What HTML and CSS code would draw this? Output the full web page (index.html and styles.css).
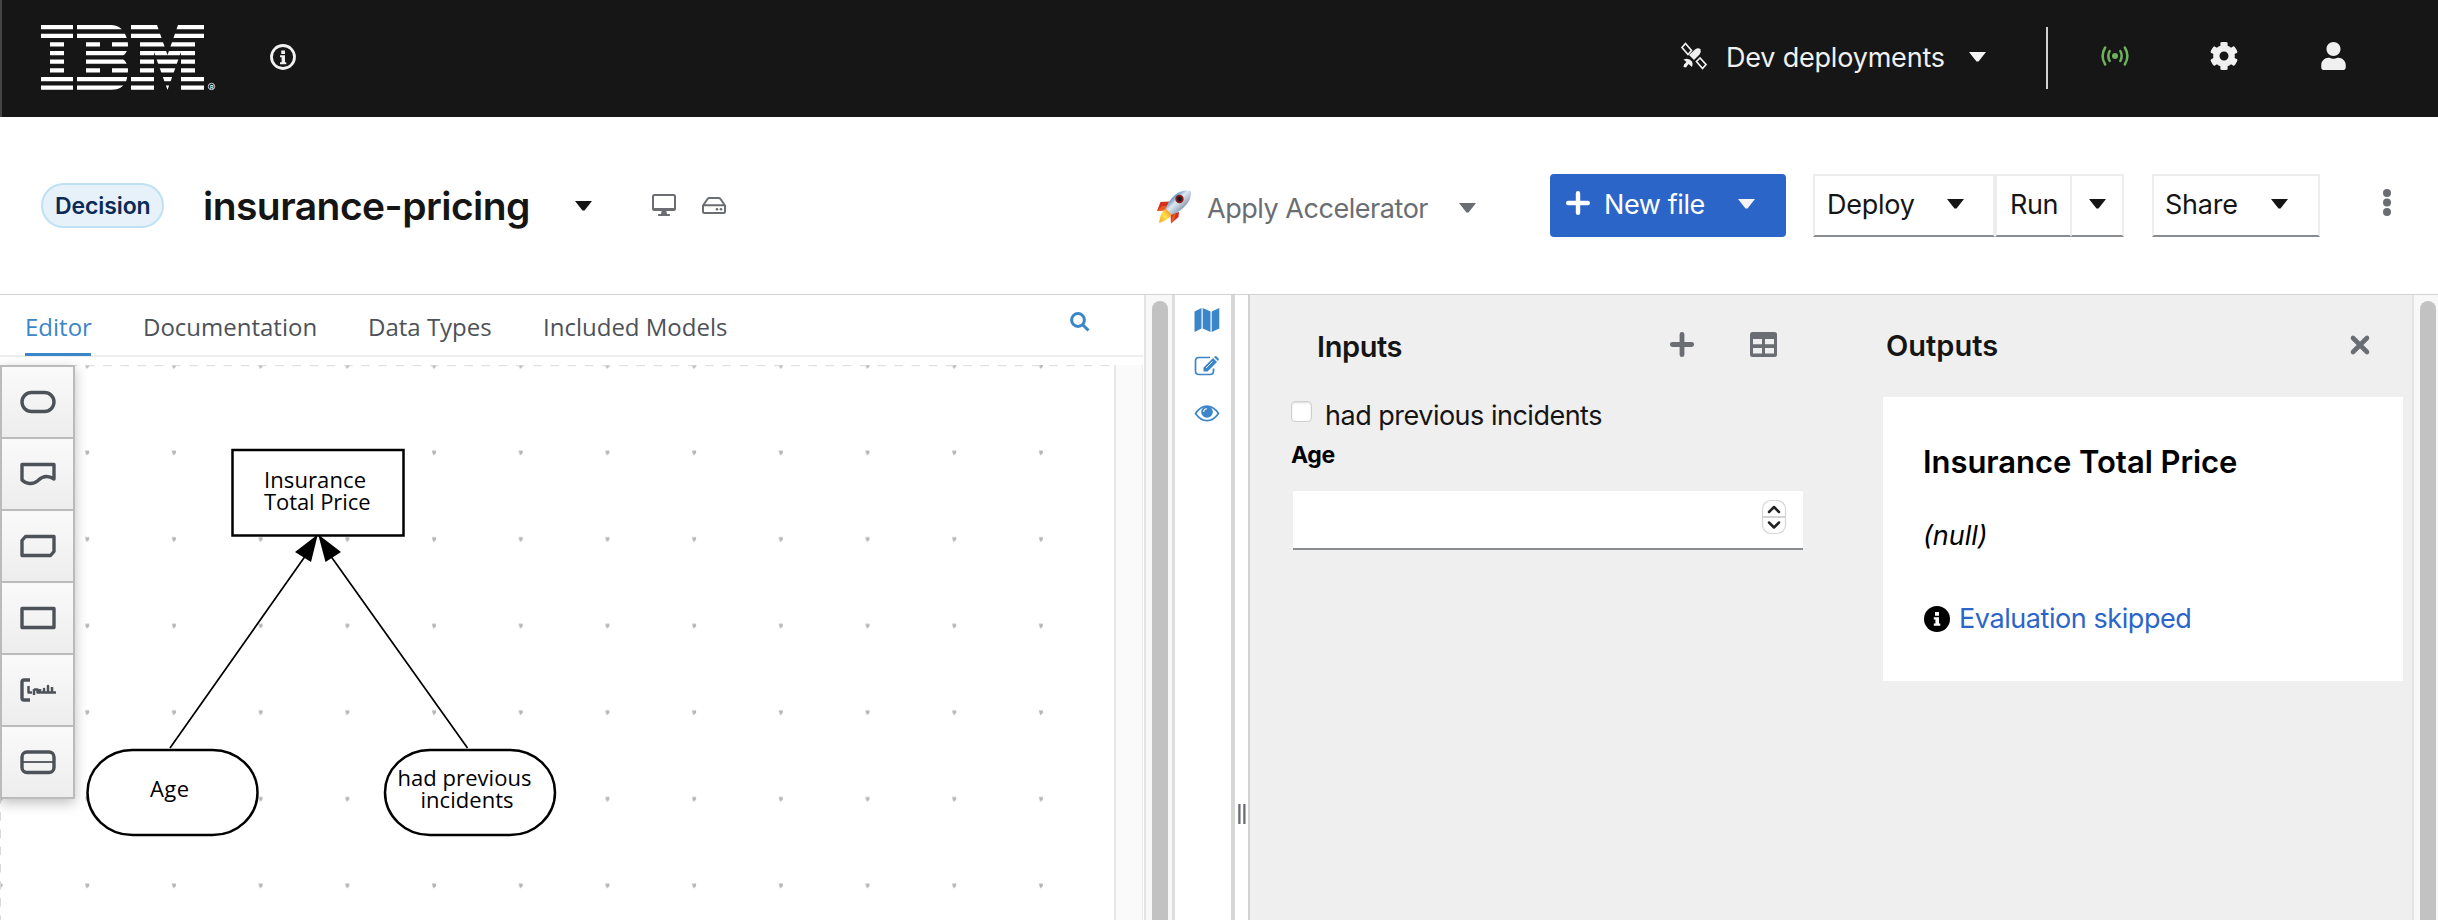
FILE: index.html
```html
<!DOCTYPE html>
<html lang="en">
<head>
<meta charset="utf-8">
<title>insurance-pricing</title>
<link rel="stylesheet" href="styles.css">
</head>
<body>
<header class="masthead">
  <svg class="logo" viewBox="0 0 176 66" width="176" height="66" role="img" aria-label="IBM">
    <defs><clipPath id="bars"><path d="M0 0h164v4.2H0zM0 8.7h164v4.2H0zM0 17.3h164v4.2H0zM0 26h164v4.2H0zM0 34.6h164v4.2H0zM0 43.3h164v4.2H0zM0 52h164v4.2H0zM0 60.6h164v4.2H0z"/></clipPath></defs>
    <g clip-path="url(#bars)" fill="#fff">
      <path d="M0 0h32v15H23v34h9v16H0V49h9V15H0z"/>
      <path fill-rule="evenodd" d="M36 0H70C77 0 82 4 84 9C86 13 87 16 87 20C87 26 84 30 80 32.4C84 35 87 39 87 45C87 49 86 53 85 57C82 62 77 65 70 65H36V49H45V15H36zM59 15V24H71V15zM59 41V50H71V41z"/>
      <path d="M90 0H116L126.500 30L137 0H163V15H154V49H163V65H140V27L126.500 65L113 27V65H90V49H99V15H90z"/>
    </g>
    <circle cx="170.500" cy="61.500" r="3.200" fill="none" stroke="#fff" stroke-width=".8"/>
    <text class="reg" x="168.900" y="63.500">R</text>
  </svg>
  <svg class="about" viewBox="0 0 26 26" width="26" height="26"><circle cx="13" cy="13" r="11.500" fill="none" stroke="#f0f0f0" stroke-width="2.800"/><path fill="#f0f0f0" d="M11.200 6.600h3.800v3.400h-3.800zM10 11.200h5v7h1.300v2H10v-2h1.600v-5H10z"/></svg>
  <div class="deployments">
    <svg class="satellite" viewBox="0 0 28 28" width="28" height="28" fill="#f0f0f0"><path d="M5.500 1.500L2 5.500L8 12.500L11.500 8.500z" fill="none" stroke="#f0f0f0" stroke-width="1.700"/><path d="M20 16L16.500 19.500L22.500 26.500L26 22.500z" fill="none" stroke="#f0f0f0" stroke-width="1.700"/><path d="M9 13L15 7.500Q18.500 5 20.500 7.500Q21.500 9.500 19.500 12.500L14 18z"/><path d="M3.500 17.500Q9 15.500 12 19.500Q13.500 22.500 12 25L8.500 22L6 25.500L3.500 25L4 22.500L6.500 20z"/></svg>
    <span class="t dep">Dev deployments</span>
    <i class="caret light"></i>
  </div>
  <i class="rule"></i>
  <svg class="signal" viewBox="0 0 28 20" width="28" height="20" fill="none" stroke="#6cb35c" stroke-width="2.500" stroke-linecap="round"><circle cx="14" cy="10" r="3" fill="#6cb35c" stroke="none"/><path d="M4.200 1.500Q-1 10 4.200 18.500M8.700 5Q5.900 10 8.700 15M19.300 5Q22.100 10 19.300 15M23.800 1.500Q29 10 23.800 18.500"/></svg>
  <svg class="gear" viewBox="8 8 496 496" width="28" height="28" fill="#f0f0f0"><path d="M487.400 315.700l-42.600-24.600c4.300-23.200 4.300-47 0-70.200l42.600-24.600c4.900-2.800 7.100-8.600 5.500-14-11.100-35.600-30-67.800-54.700-94.600-3.800-4.100-10-5.100-14.800-2.300L380.800 110c-17.900-15.400-38.500-27.300-60.800-35.100V25.800c0-5.600-3.900-10.500-9.400-11.700-36.700-8.200-74.300-7.800-109.200 0-5.500 1.200-9.400 6.100-9.400 11.700V75c-22.200 7.900-42.800 19.800-60.800 35.100L88.700 85.500c-4.900-2.800-11-1.900-14.800 2.300-24.700 26.700-43.600 58.900-54.700 94.600-1.700 5.400.6 11.200 5.500 14L67.300 221c-4.300 23.200-4.300 47 0 70.200l-42.600 24.600c-4.900 2.800-7.100 8.600-5.500 14 11.100 35.600 30 67.800 54.700 94.600 3.800 4.100 10 5.100 14.800 2.300l42.600-24.600c17.900 15.400 38.500 27.300 60.800 35.100v49.200c0 5.600 3.900 10.500 9.400 11.700 36.700 8.200 74.300 7.800 109.200 0 5.500-1.200 9.400-6.100 9.400-11.700v-49.200c22.200-7.900 42.800-19.800 60.800-35.100l42.600 24.600c4.900 2.800 11 1.900 14.800-2.300 24.700-26.700 43.600-58.900 54.700-94.600 1.500-5.500-.7-11.300-5.600-14.100zM256 336c-44.100 0-80-35.900-80-80s35.900-80 80-80 80 35.900 80 80-35.900 80-80 80z"/></svg>
  <svg class="user" viewBox="0 0 448 512" width="25" height="28" fill="#f0f0f0"><path d="M224 256c70.700 0 128-57.300 128-128S294.700 0 224 0 96 57.300 96 128s57.300 128 128 128zm89.600 32h-16.700c-22.200 10.200-46.900 16-72.900 16s-50.600-5.800-72.900-16h-16.700C60.200 288 0 348.200 0 422.400V464c0 26.500 21.500 48 48 48h352c26.500 0 48-21.500 48-48v-41.600c0-74.200-60.200-134.400-134.400-134.400z"/></svg>
</header>

<section class="toolbar">
  <span class="badge"><span class="t dec">Decision</span></span>
  <span class="t name">insurance-pricing</span>
  <i class="caret name-caret"></i>
  <svg class="desktop" viewBox="0 0 24 22" width="24" height="22"><path fill="none" stroke="#6a6e73" stroke-width="2" d="M2.500 1H21.500Q23 1 23 2.500V14.500Q23 16 21.500 16H2.500Q1 16 1 14.500V2.500Q1 1 2.500 1z"/><path fill="#6a6e73" d="M1 14h22v2.600H1zM9.800 16h4.400l.8 4h2.300q.7 0 .7 1t-.7 1H6.700Q6 22 6 21t.7-1H9z"/></svg>
  <svg class="hdd" viewBox="0 0 24 17" width="24" height="17"><path fill="none" stroke="#6a6e73" stroke-width="2" stroke-linejoin="round" d="M1 8.500L5.500 2Q6.200 1 7.500 1H16.500Q17.800 1 18.500 2L23 8.500V14.500Q23 16 21.500 16H2.500Q1 16 1 14.500zM1 8.300H23"/><circle cx="15" cy="12.200" r="1.300" fill="#6a6e73"/><circle cx="19" cy="12.200" r="1.300" fill="#6a6e73"/></svg>
  <div class="accel">
    <svg class="rocket" viewBox="0 0 36 34" width="36" height="34">
      <defs><linearGradient id="hull" x1="0" y1="0" x2="1" y2="1"><stop offset=".25" stop-color="#4d86b8"/><stop offset=".45" stop-color="#dfe8f0"/><stop offset=".62" stop-color="#a9b9c9"/><stop offset=".85" stop-color="#3f6288"/></linearGradient><linearGradient id="flame" x1="1" y1="0" x2="0" y2="1"><stop offset="0" stop-color="#f26a1b"/><stop offset=".5" stop-color="#ffe04a"/><stop offset="1" stop-color="#f7a321"/></linearGradient></defs>
      <path fill="#d5301c" d="M13 11.500L4.500 12L1 21L11 20zM23 22L22.500 27L15 33.500L14.500 24z"/>
      <path fill="#ee5a22" d="M1 21L6 16L12 16L10.500 20zM15 33.500L16 27L20 22L18 30z"/>
      <path fill="url(#hull)" d="M35 1Q26 -1 19 5Q12 11 9.500 19.500L15.500 25Q24 22 30 15Q35.500 9 35 1z"/>
      <circle cx="23.500" cy="9" r="4.200" fill="#8d1d17"/><circle cx="23.500" cy="9" r="2.400" fill="#1b1b22"/>
      <path fill="url(#flame)" d="M9.500 18.500L15.500 24.500Q13 30 3 33Q4 23 9.500 18.500z"/>
    </svg>
    <span class="t acc">Apply Accelerator</span>
    <i class="caret grey"></i>
  </div>
  <button class="primary"><svg viewBox="0 0 24 24" width="24" height="24"><path d="M12 2.200V21.800M2.200 12H21.800" stroke="#fff" stroke-width="4.400" stroke-linecap="round"/></svg><span class="t newf">New file</span><i class="caret light"></i></button>
  <button class="btn deploy"><span class="t depl">Deploy</span><i class="caret"></i></button>
  <div class="split"><button class="btn run"><span class="t runt">Run</span></button><button class="btn drop"><i class="caret"></i></button></div>
  <button class="btn share"><span class="t shr">Share</span><i class="caret"></i></button>
  <svg class="kebab" viewBox="0 0 8 27" width="8" height="27" fill="#6a6e73"><circle cx="4" cy="4" r="4"/><circle cx="4" cy="13.500" r="4"/><circle cx="4" cy="23" r="4"/></svg>
</section>

<main class="work">
  <section class="editor">
    <nav class="tabs">
      <a class="tab active"><span class="t ed">Editor</span></a><a class="tab"><span class="t doc">Documentation</span></a><a class="tab"><span class="t dat">Data Types</span></a><a class="tab"><span class="t inc">Included Models</span></a>
      <svg class="search" viewBox="0 0 20 20" width="20" height="20" fill="none" stroke="#3b86c9" stroke-width="3"><circle cx="8" cy="8" r="6.400"/><path d="M12.700 12.700L18.500 18.500"/></svg>
    </nav>
    <div class="stage">
      <svg class="canvas" viewBox="0 365 1114 555" width="1114" height="555">
        <defs><pattern id="grid" x="-.5" y="361.500" width="86.700" height="86.600" patternUnits="userSpaceOnUse"><path d="M-1 2.500h4v2.500l-2.500 2.500z" fill="#b5b5b5"/><path d="M85.600 2.500h1.100v4z" fill="#b5b5b5"/></pattern></defs>
        <rect x="0" y="365" width="1060" height="555" fill="url(#grid)"/>
        <path d="M0 365.700H1114M.5 365V920" fill="none" stroke="#d9d9d9" stroke-dasharray="8.600 8.600"/>
        <g fill="#fff" stroke="#000" stroke-width="2.500">
          <rect x="232.500" y="450" width="171" height="85.500"/>
          <rect x="87.500" y="750" width="170" height="85" rx="45" ry="42.500"/>
          <rect x="385" y="750" width="170" height="85" rx="45" ry="42.500"/>
        </g>
        <path d="M170 748L306 555M467.500 748L330 555" stroke="#000" stroke-width="1.700"/>
        <path d="M317.800 534.500L295 552L311 562zM318.200 534.500L341 552L325.500 562z"/>
        <g class="node-text">
          <text x="264" y="488" textLength="102">Insurance</text><text x="264" y="510" textLength="106.500">Total Price</text>
          <text x="150" y="797" textLength="39">Age</text>
          <text x="397.500" y="786" textLength="134">had previous</text><text x="420.500" y="808" textLength="93">incidents</text>
        </g>
      </svg>
      <div class="palette">
        <button><svg viewBox="0 0 36 24" width="36" height="24"><rect x="2" y="2.500" width="32" height="19" rx="9.500"/></svg></button>
        <button><svg viewBox="0 0 36 24" width="36" height="24"><path d="M2 2.500H34V17C27 12.500 22 14.500 18 18.500C13 23 6 22 2 18z"/></svg></button>
        <button><svg viewBox="0 0 36 24" width="36" height="24"><path d="M5.500 2.500H34V17.500L30.500 21.500H2V6.500z"/></svg></button>
        <button><svg viewBox="0 0 36 24" width="36" height="24"><rect x="2" y="2.500" width="32" height="19"/></svg></button>
        <button><svg viewBox="0 0 36 24" width="36" height="24"><path d="M10 2H4Q2 2 2 4V20Q2 22 4 22H10"/><path stroke-width="2.500" d="M8.500 8V14.500H12M14 11V17M14 11.500H17.500V14.500H20V11M21 14.500H24V11V14.500H28V8V14.500H32V9M30 14.500H36"/></svg></button>
        <button><svg viewBox="0 0 36 24" width="36" height="24"><rect x="2" y="2" width="32" height="20.500" rx="5"/><path stroke-width="1.800" d="M2 12H34"/></svg></button>
      </div>
      <div class="track"></div>
    </div>
  </section>
  <div class="scroll left"><i></i></div>
  <aside class="dock">
    <svg viewBox="0 0 26 24" width="26" height="24" fill="#3b86c9"><path d="M.5 3.500L7.500 0V20.500L.5 24zM8.700 0L16.500 3.500V24L8.700 20.500zM17.700 3.500L25.300 0V20.500L17.700 24z"/></svg>
    <svg viewBox="0 0 26 20" width="26" height="20"><path d="M16 1.500H5Q1.500 1.500 1.500 5V15Q1.500 18.500 5 18.500H16Q19.500 18.500 19.500 15V12.500" fill="none" stroke="#3b86c9" stroke-width="1.700"/><path fill="#3b86c9" d="M19 2L23 6L13.500 15.500H9.500V11.500zM20 1L21 .2Q21.700 -.3 22.300 .2L24.600 2.500Q25.200 3.200 24.600 4L24 5z"/><path d="M12 12L18.500 5.500" stroke="#fff" stroke-width=".9"/></svg>
    <svg viewBox="0 0 26 17" width="26" height="17"><path d="M1.500 8.500Q6.500 1.200 13 1.200T24.500 8.500Q19.500 15.700 13 15.700T1.500 8.500z" fill="none" stroke="#3b86c9" stroke-width="1.700"/><circle cx="13" cy="7" r="5.800" fill="#3b86c9"/><path d="M9.700 7Q9.700 3.800 13 3.700" fill="none" stroke="#fff" stroke-width="1.100"/></svg>
  </aside>
  <div class="splitter"><i></i><i></i></div>
  <section class="inputs">
    <div class="head"><span class="t inp">Inputs</span>
      <svg class="add" viewBox="0 0 24 25" width="24" height="25"><path d="M12 2.300V22.700M2.300 12.500H21.700" stroke="#6a6e73" stroke-width="4.800" stroke-linecap="round"/></svg>
      <svg class="table" viewBox="0 0 27 25" width="27" height="25"><path fill="#6a6e73" fill-rule="evenodd" d="M2.500 0H24.500Q27 0 27 2.500V22.500Q27 25 24.500 25H2.500Q0 25 0 22.500V2.500Q0 0 2.500 0zM3 7v5.300h9V7zM15 7v5.300h9V7zM3 16v5.500h9V16zM15 16v5.500h9V16z"/></svg>
    </div>
    <label class="check"><i class="box"></i><span class="t had">had previous incidents</span></label>
    <label class="age"><span class="t agel">Age</span></label>
    <div class="field"><svg viewBox="0 0 26 36" width="26" height="36"><rect x="1.500" y="1.500" width="23" height="33" rx="8.500" fill="#fff" stroke="#d6d6d6" stroke-width="1.200"/><path d="M1.500 18H24.500" stroke="#cfcfcf" stroke-width="1.800"/><path d="M8 13L13 8L18 13M8 23.500L13 28.500L18 23.500" fill="none" stroke="#222" stroke-width="2.500" stroke-linecap="round" stroke-linejoin="round"/></svg></div>
  </section>
  <section class="outputs">
    <div class="head"><span class="t out">Outputs</span>
      <svg class="close" viewBox="0 0 20 20" width="20" height="20"><path d="M3 3L17 17M17 3L3 17" stroke="#6a6e73" stroke-width="4.600" stroke-linecap="round"/></svg>
    </div>
    <article class="card">
      <h2 class="t ttl">Insurance Total Price</h2>
      <em class="t nul">(null)</em>
      <div class="status"><svg viewBox="0 0 26 26" width="26" height="26"><circle cx="13" cy="13" r="13"/><path fill="#fff" d="M11 6h4v3.800h-4zM9.800 11.300h5.200v6.200h1.300v2.300H9.800v-2.300h1.600v-3.900H9.800z"/></svg><span class="t eva">Evaluation skipped</span></div>
    </article>
  </section>
  <div class="scroll right"><i></i></div>
</main>
</body>
</html>
```
FILE: styles.css
```css
* { box-sizing: border-box; }
body { margin: 0; width: 2438px; height: 920px; overflow: hidden; background: #fff; color: #151515; font-family: Inter, "Liberation Sans", sans-serif; font-size: 27px; line-height: 36px; }
svg { display: block; flex: none; overflow: visible; }
button { font: inherit; color: inherit; padding: 0; border: 0; background: none; border-radius: 0; }
.t { display: block; flex: none; white-space: nowrap; text-align: left; }
.caret { flex: none; width: 17px; height: 10px; background: #151515; clip-path: polygon(0 0, 100% 0, 56% 94%, 44% 94%); }
.caret.light { background: #f4f4f4; }
.caret.grey { background: #6a6e73; }

.masthead { display: flex; height: 117px; background: #161616; border-left: 2px solid #444; color: #f0f0f0; }
.logo { margin: 25px 0 0 39px; }
.reg { font: bold 5px "Liberation Sans", sans-serif; fill: #fff; }
.about { margin: 44px 0 0 53px; }
.deployments { display: flex; margin-left: 1384px; padding-top: 39px; }
.satellite { margin-top: 3px; }
.dep { width: 218px; margin: 1px 0 0 18px; letter-spacing: -.2px; }
.deployments .caret { margin: 13px 0 0 25px; }
.rule { width: 2px; height: 62px; margin: 27px 0 0 60px; background: #d2d2d2; }
.signal { margin: 46px 0 0 53px; }
.gear { margin: 42px 0 0 81px; }
.user { margin: 42px 0 0 83px; }

.toolbar { display: flex; height: 178px; border-bottom: 1px solid #d2d2d2; }
.badge { width: 123px; height: 45px; margin: 66px 0 0 41px; padding: 3px 0 0 12px; border: 2px solid #bee1f4; border-radius: 23px; background: #e7f1fa; color: #0b2a55; font-size: 23px; font-weight: 600; letter-spacing: -.1px; }
.name { width: 324px; margin: 69px 0 0 39px; font-size: 39px; font-weight: 600; line-height: 40px; letter-spacing: -.55px; }
.name-caret { margin: 84px 0 0 48px; }
.desktop { margin: 77px 0 0 60px; }
.hdd { margin: 80px 0 0 26px; }
.accel { display: flex; width: 320px; margin: 73px 0 0 430px; color: #6a6e73; }
.acc { width: 220px; margin: 1px 0 0 15px; letter-spacing: -.46px; }
.accel .caret { margin: 13px 0 0 32px; }
.primary, .btn { display: flex; height: 63px; margin-top: 57px; padding-top: 11px; }
.primary { width: 236px; margin-left: 74px; padding-left: 16px; border-radius: 4px; background: #2b65c8; color: #fff; }
.primary svg { margin-top: 6px; }
.newf { width: 99px; margin: 2px 0 0 14px; letter-spacing: -.4px; }
.primary .caret { margin: 14px 0 0 35px; }
.btn { border: 2px solid #ededed; border-bottom-color: #8a8d90; padding-top: 9px; letter-spacing: -.25px; }
.btn .t { margin-top: 2px; }
.btn .caret { margin-top: 14px; }
.deploy { width: 182px; margin-left: 27px; padding-left: 12px; }
.depl { width: 86px; }
.deploy .caret { margin-left: 34px; }
.split { display: flex; }
.run { width: 76px; padding-left: 13px; border-right-width: 1px; letter-spacing: -.4px; }
.drop { width: 53px; padding-left: 17px; border-left-width: 1px; }
.share { width: 168px; margin-left: 28px; padding-left: 11px; }
.shr { width: 71px; }
.share .caret { margin-left: 35px; }
.kebab { margin: 72px 0 0 63px; }

.work { display: flex; height: 625px; }
.editor { width: 1143px; font-family: "Open Sans", sans-serif; }
.tabs { display: flex; height: 62px; padding-left: 25px; border-bottom: 2px solid #ededed; color: #4d5258; font-size: 24px; }
.tab { height: 61px; padding-top: 14px; margin-right: 52px; }
.tab.active { color: #3b86c9; border-bottom: 3px solid #3b86c9; }
.ed { width: 66px; } .doc { width: 173px; } .dat { width: 123px; } .inc { width: 184px; }
.search { margin: 17px 53px 0 auto; }
.stage { position: relative; display: flex; padding-top: 8px; height: 563px; }
.node-text { font: 22px "Open Sans", sans-serif; }
.palette { position: absolute; left: 0; top: 8px; width: 75px; height: 434px; display: flex; flex-direction: column; border: 1px solid #bbb; box-shadow: 0 4px 12px rgba(0, 0, 0, .25); }
.palette button { flex: 1; display: flex; align-items: center; justify-content: center; border: 1px solid #bbb; background: linear-gradient(#fafafa, #ededed); }
.palette svg { fill: none; stroke: #4d5258; stroke-width: 3.4; stroke-linejoin: round; }
.track { width: 29px; border-left: 2px solid #e6e6e6; border-right: 1px solid #ececec; background: #fafafa; }
.scroll { border-left: 2px solid #e4e4e4; background: #f8f8f8; padding: 6px 0 0 6px; }
.scroll i { display: block; width: 16px; height: 640px; border-radius: 8px; background: #c2c2c2; }
.scroll.left { width: 31px; margin-left: 1px; border-right: 3px solid #dedede; height: 625px; overflow: hidden; }
.scroll.right { width: 26px; margin-left: auto; overflow: hidden; }
.dock { width: 56px; padding: 13px 0 0 19px; display: flex; flex-direction: column; }
.dock svg + svg { margin-top: 24px; }
.dock svg:last-child { margin-top: 29px; }
.splitter { display: flex; gap: 2px; width: 19px; padding: 509px 0 0 3px; border-left: 4px solid #d6d6d6; border-right: 2px solid #d2d2d2; }
.splitter i { width: 3px; height: 20px; background: linear-gradient(90deg, #b0b2b5, #6a6e73 34% 66%, #b0b2b5 67%); }
.inputs, .outputs { background: #efefef; }
.inputs { width: 590px; padding-left: 41px; }
.outputs { width: 572px; padding-left: 43px; }
.head { display: flex; font-size: 29px; font-weight: 600; line-height: 40px; padding-top: 31px; height: 102px; }
.inp { width: 84px; margin-left: 26px; margin-top: 1px; letter-spacing: -.4px; }
.add { margin: 6px 0 0 269px; }
.table { margin: 6px 0 0 56px; }
.check { display: flex; height: 44px; }
.box { width: 21px; height: 21px; margin-top: 4px; border: 1px solid #d0d0d0; border-radius: 4px; background: #fff; box-shadow: inset 0 1px 2px rgba(0, 0, 0, .15); }
.had { margin: 1px 0 0 13px; letter-spacing: -.5px; }
.age { display: block; height: 50px; font-size: 23px; font-weight: 700; color: #000; line-height: 28px; letter-spacing: -.3px; }
.field { display: flex; justify-content: flex-end; width: 510px; height: 59px; margin-left: 2px; padding: 8px 16px 0 0; background: #fff; border-bottom: 2px solid #8a8d90; }
.out { margin-left: 3px; width: 113px; }
.close { margin: 9px 0 0 351px; }
.card { width: 520px; height: 284px; padding: 43px 0 0 40px; background: #fff; color: #000; }
.ttl { margin: 0; font-size: 31px; font-weight: 600; line-height: 44px; letter-spacing: -.05px; }
.nul { margin-top: 34px; }
.status { display: flex; margin: 46px 0 0 1px; }
.status svg { margin-top: 6px; }
.eva { margin: 1px 0 0 9px; color: #2b65c8; letter-spacing: -.43px; }
```
